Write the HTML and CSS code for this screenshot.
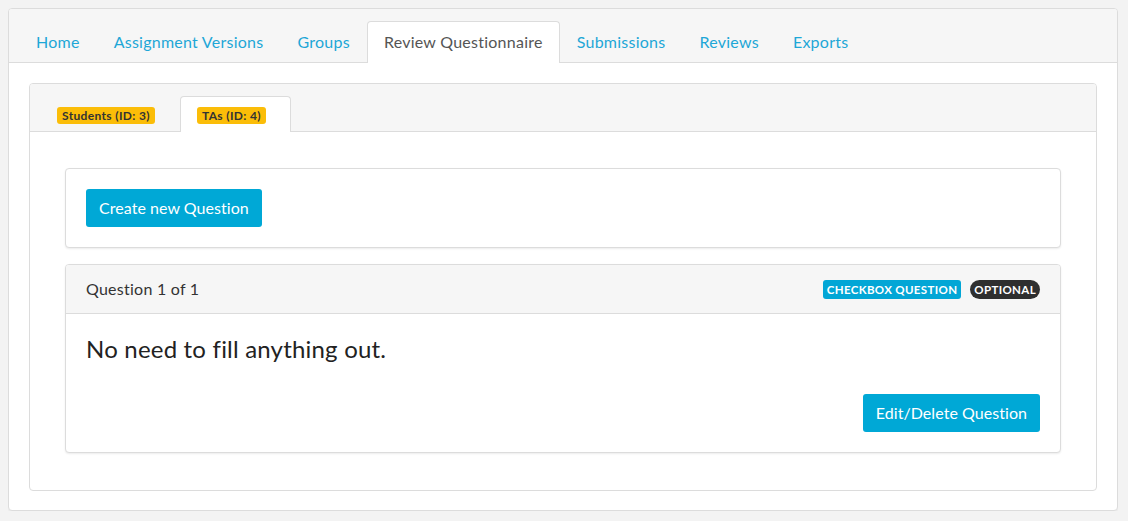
FILE: index.html
```html
<!DOCTYPE html>
<html>
<head>
<meta charset="utf-8">
<link rel="stylesheet" href="styles.css">
</head>
<body>
<div class="card outer">
  <div class="card-header tabs-header">
    <ul class="nav-tabs">
      <li><a class="nav-link">Home</a></li>
      <li><a class="nav-link">Assignment Versions</a></li>
      <li><a class="nav-link">Groups</a></li>
      <li><a class="nav-link active">Review Questionnaire</a></li>
      <li><a class="nav-link">Submissions</a></li>
      <li><a class="nav-link">Reviews</a></li>
      <li><a class="nav-link">Exports</a></li>
    </ul>
  </div>
  <div class="outer-body">
    <div class="card inner">
      <div class="card-header tabs-header">
        <ul class="nav-tabs sub-tabs">
          <li><a class="nav-link"><span class="badge badge-warning">Students (ID: 3)</span></a></li>
          <li><a class="nav-link active"><span class="badge badge-warning">TAs (ID: 4)</span></a></li>
        </ul>
      </div>
      <div class="inner-body">
        <div class="card panel shadow">
          <div class="panel-body">
            <button class="btn">Create new Question</button>
          </div>
        </div>
        <div class="card panel shadow">
          <div class="card-header q-header">
            <span class="q-title">Question 1 of 1</span>
            <span class="badges">
              <span class="badge badge-info">CHECKBOX QUESTION</span>
              <span class="badge badge-pill">OPTIONAL</span>
            </span>
          </div>
          <div class="panel-body">
            <h4 class="q-text">No need to fill anything out.</h4>
            <div class="actions">
              <button class="btn">Edit/Delete Question</button>
            </div>
          </div>
        </div>
      </div>
    </div>
  </div>
</div>
</body>
</html>
```

FILE: styles.css
```css
* { box-sizing: border-box; }
body {
  margin: 8px 10px 10px 8px;
  background: #f3f3f3;
  font-family: "Lato", "Noto Sans", sans-serif;
  font-size: 16px;
  line-height: 24px;
  letter-spacing: 0.25px;
  color: #333;
}
.card {
  background: #fff;
  border: 1px solid #dcdcdc;
  border-radius: 4px;
}
.outer {
  height: 503px;
  box-shadow: 0 1px 2px rgba(0,0,0,0.05);
}
.card-header {
  background: #f6f6f6;
  border-bottom: 1px solid #dcdcdc;
}
.tabs-header {
  padding: 12px 20px 0;
}
.outer > .tabs-header { border-radius: 3px 3px 0 0; }
.nav-tabs {
  list-style: none;
  margin: 0 -10px -1px;
  padding: 0;
  display: flex;
}
.nav-link {
  display: block;
  padding: 8px 16px;
  border: 1px solid transparent;
  border-bottom: none;
  border-radius: 4px 4px 0 0;
  color: #1ea7d7;
  cursor: pointer;
}
.nav-link.active {
  background: #fff;
  border-color: #dcdcdc;
  color: #555;
  padding-bottom: 9px;
}
.outer-body {
  padding: 20px;
}
.sub-tabs .nav-link {
  line-height: 17px;
  padding: 8px 24px 7px 16px;
}
.sub-tabs .nav-link.active { padding-bottom: 8px; }
.inner .tabs-header { border-radius: 3px 3px 0 0; }
.inner-body {
  padding: 36px 35px 37px;
}
.badge {
  display: inline-block;
  font-weight: 700;
  font-size: 12px;
  line-height: 1;
  padding: 3px 5px 2px;
  border-radius: 3px;
  vertical-align: middle;
  letter-spacing: 0.35px;
}
.badge-warning {
  background: #fbbd08;
  color: #333;
}
.badge-info {
  background: #02a6d6;
  color: #fff;
  font-size: 11.5px;
  padding: 4px 4px;
  letter-spacing: 0.35px;
}
.badge-pill {
  background: #2f2f2f;
  color: #fff;
  font-size: 11.5px;
  padding: 4px 4px;
  border-radius: 10px;
  margin-left: 9px;
  letter-spacing: 0.35px;
}
.panel { margin-bottom: 16px; }
.panel:last-child { margin-bottom: 0; }
.shadow { box-shadow: 0 1px 2px rgba(0,0,0,0.08); }
.panel-body { padding: 20px; }
.btn {
  font-family: inherit;
  font-size: 16px;
  line-height: 24px;
  letter-spacing: 0.05px;
  padding: 7px 13px;
  border: none;
  border-radius: 3px;
  background: #00a8d6;
  color: #fff;
  cursor: pointer;
}
.q-header {
  display: flex;
  justify-content: space-between;
  align-items: center;
  padding: 12px 20px;
  border-radius: 3px 3px 0 0;
}
.badges { display: flex; align-items: center; }
.q-text {
  margin: 0 0 31px;
  font-size: 24px;
  font-weight: 400;
  line-height: 29px;
  letter-spacing: 0.2px;
  color: #222;
}
.actions {
  display: flex;
  justify-content: flex-end;
}
```
